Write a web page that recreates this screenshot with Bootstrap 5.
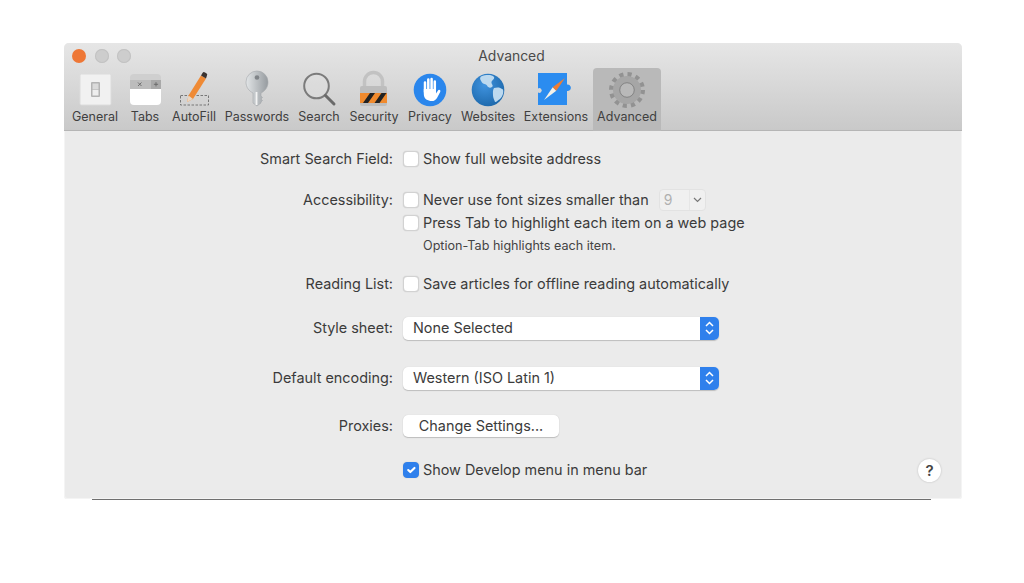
<!doctype html>
<html lang="en"><head><meta charset="utf-8"><title>Advanced</title>
<link href="https://cdn.jsdelivr.net/npm/bootstrap@5.3.0/dist/css/bootstrap.min.css" rel="stylesheet">
<style>
html,body{height:100%;background:#fff;overflow:hidden}
body{font-family:Inter,"Noto Sans",sans-serif;color:#3b3b3b;padding:43px 62px 0 64px;font-size:14.4px;line-height:18px}
.pref-win{height:456px;background:#ebebeb;border-radius:5px 5px 3px 3px;box-shadow:inset 0 0 0 1px #f4f4f4}
.pref-bar{height:88px;background:linear-gradient(#e6e6e6,#c9c9c9);border-bottom:1px solid #b5b5b5;border-radius:5px 5px 0 0}
.pref-title{height:25px;display:grid;grid-template-columns:1fr auto 1fr;align-items:center;font-size:13.9px;color:#4a4a4a}
.lights{padding-left:8px;gap:8.500px}
.lamp{width:14px;height:14px;border-radius:50%;background:#cdcdcd;box-shadow:inset 0 0 0 1px #c2c2c2}
.lamp-red{background:#ee7736;box-shadow:none}
.title-text{margin-right:3px}
.tools{padding-left:3px;height:63px}
.tool{height:63px;font-size:12.5px;line-height:14px;color:#3f3f3f;white-space:nowrap}
.tool svg{display:block;flex:none;overflow:visible}
.tool-on{background:#b9b9b9;border-radius:4px 4px 0 0}
.w-general{width:56px}.w-tabs{width:44px}.w-autofill{width:54px}.w-pass{width:72px}.w-search{width:52px}.w-security{width:58px}.w-privacy{width:54px}.w-web{width:62px}.w-ext{width:74px}.w-adv{width:68px}
.pref-row{display:flex;align-items:center;padding-right:21px}
.pref-label{width:330px;text-align:right;padding-right:1px;flex:none}
.pref-val{margin-left:9px;gap:4px;display:flex;align-items:center;white-space:nowrap}
.form-check-input.cbx{width:16px;height:16px;margin:0;border-radius:4px;border:1px solid #d2d2d2;background-color:#fff;flex:none;box-shadow:0 0 1px #bbb}
.form-check-input.cbx:checked{background-color:#2f80ec;border-color:#2f80ec}
.r1{margin-top:19px;height:18px}.r2{margin-top:23px;height:18px}.r3{margin-top:5px;height:18px}
.hint{margin-top:5px;padding-left:359px;font-size:12.600px;height:18px;color:#444}
.r4{margin-top:20px;height:18px}
.r5{margin-top:23px;height:24px}.r6{margin-top:26px;height:24px}.r7{margin-top:24px;height:24px}.r8{margin-top:21px;height:22px}
.pop{width:316px;height:23px;background:#fff;border-radius:5px;box-shadow:0 1px 1px #bdbdbd,0 0 1px #c5c5c5;padding-left:10px;overflow:hidden;display:flex;align-items:center;justify-content:space-between}
.pop-arrows{width:19px;height:23px;background:#2f80ec;display:flex;align-items:center;justify-content:center;flex:none}
.push{width:156px;height:22px;padding:0;background:#fff;border:0;border-radius:5px;box-shadow:0 1px 1px #bdbdbd,0 0 1px #c5c5c5;font-size:14.4px;color:#3b3b3b;line-height:22px}
.mini-pop{width:47px;height:22px;margin-left:6px;border:1px solid #e2e2e2;border-radius:4px;background:#f0f0f0;color:#b0b0b0;display:flex;align-items:center;font-size:14px}
.mini-num{width:30px;padding-left:4px;border-right:1px solid #e6e6e6;height:20px;line-height:20px}
.mini-arr{flex:1;display:flex;justify-content:center}
.help-btn{width:23px;height:23px;margin-left:auto;padding:0;border:0;border-radius:50%;background:#fff;box-shadow:0 0 2px #b5b5b5;font-weight:600;font-size:15px;line-height:23px;color:#444}
.pref-foot{height:1px;background:#6f6f6f;margin:0 31px 0 28px}
</style></head><body>
<div class="pref-win">
<div class="pref-bar">
 <div class="pref-title"><div class="d-flex lights"><span class="lamp lamp-red"></span><span class="lamp"></span><span class="lamp"></span></div><div class="title-text">Advanced</div><div></div></div>
 <div class="d-flex tools">
  <div class="tool w-general d-flex flex-column align-items-center"><svg width="40" height="42" viewBox="0 0 40 42"><rect x="5" y="6" width="31" height="31" rx="1.500" fill="#f1f1f1" stroke="#dcdcdc"/><rect x="16" y="14" width="9" height="15" rx="1" fill="#b3b3b3"/><rect x="17.500" y="15.500" width="6" height="6" fill="#dadada"/><rect x="17.500" y="22" width="6" height="5.500" fill="#eee"/></svg>General</div>
  <div class="tool w-tabs d-flex flex-column align-items-center"><svg width="40" height="42" viewBox="0 0 40 42"><path d="M5 10a4 4 0 0 1 4-4h23a4 4 0 0 1 4 4v2H5z" fill="#cfcfcf"/><rect x="5" y="12" width="31" height="9" fill="#bcbcbc"/><rect x="26" y="12" width="10" height="9" fill="#a9a9a9"/><path d="M5 21h31v12a4 4 0 0 1-4 4H9a4 4 0 0 1-4-4z" fill="#fff"/><path d="M13 14.500l3.500 3.500m0-3.500L13 18M31 14.200v4.200m-2.100-2.100h4.200" stroke="#666" stroke-width=".9" fill="none"/></svg>Tabs</div>
  <div class="tool w-autofill d-flex flex-column align-items-center"><svg width="40" height="42" viewBox="0 0 40 42"><rect x="6.500" y="27.500" width="28" height="9.500" fill="none" stroke="#777" stroke-width="1" stroke-dasharray="2.500 1.500"/><path d="M13 34l1.500-6.500L27 7.500l5 3L19 31z" fill="#ef8a35"/><path d="M13 34l1.500-6.500 4.500 3.500z" fill="#e9d6c2"/><path d="M27 7.500l1.500-2.500a1.800 1.800 0 0 1 2.500-.6l1.300.8a1.800 1.800 0 0 1 .6 2.500l-.9 2.800z" fill="#3b3330"/></svg>AutoFill</div>
  <div class="tool w-pass d-flex flex-column align-items-center"><svg width="40" height="42" viewBox="0 0 40 42"><defs><linearGradient id="k" x1="0" x2="1"><stop offset="0" stop-color="#e2e5e7"/><stop offset="1" stop-color="#969b9f"/></linearGradient></defs><path d="M16 25C12 23 9 19.500 9 14a11 11 0 0 1 22 0c0 5.500-3 9-7 11v3l1.500 1.500L24 31l1.500 1.500L24 34v1l-4 3-4-3z" fill="url(#k)" stroke="#a4a8ab" stroke-width=".6"/><circle cx="20" cy="9.500" r="2.300" fill="#808488"/><path d="M19.500 24v13" stroke="#f4f4f4" stroke-width="1.800"/></svg>Passwords</div>
  <div class="tool w-search d-flex flex-column align-items-center"><svg width="40" height="42" viewBox="0 0 40 42"><circle cx="17.500" cy="18" r="12.300" fill="#e1e1e1" fill-opacity=".4" stroke="#7b7b7b" stroke-width="2"/><path d="M26.500 27.500l8.500 8.500" stroke="#6a6a6a" stroke-width="3" stroke-linecap="round"/></svg>Search</div>
  <div class="tool w-security d-flex flex-column align-items-center"><svg width="40" height="42" viewBox="0 0 40 42"><path d="M10.500 20v-6.500a9 9 0 0 1 18 0V20" fill="none" stroke="#c2c2c2" stroke-width="3.500"/><rect x="6" y="18" width="27" height="20" rx="2" fill="#bdbdbd"/><rect x="6" y="25" width="27" height="10" fill="#f08a2d"/><path d="M9 35l7-10h5l-7 10zM20.500 35l7-10h5l-7 10z" fill="#222"/></svg>Security</div>
  <div class="tool w-privacy d-flex flex-column align-items-center"><svg width="40" height="42" viewBox="0 0 40 42"><circle cx="20" cy="22" r="16.300" fill="#2a86ec"/><path d="M15 24V14.500M18.300 22V11.500M21.600 22V11M24.800 22V13.500" stroke="#fff" stroke-width="2.500" stroke-linecap="round" fill="none"/><path d="M13.800 21h12.200v4.500l2-3a1.300 1.300 0 0 1 2.200 1.400l-3.200 6c-1.200 2-3 3.100-5.200 3.100-4 0-8-2-8-7z" fill="#fff"/></svg>Privacy</div>
  <div class="tool w-web d-flex flex-column align-items-center"><svg width="40" height="42" viewBox="0 0 40 42"><defs><radialGradient id="g" cx=".4" cy=".35" r=".75"><stop offset="0" stop-color="#3f93df"/><stop offset="1" stop-color="#1a64a6"/></radialGradient></defs><circle cx="20" cy="22" r="16.300" fill="url(#g)"/><path d="M13 8.500c5-2 11-2 13 .5 1 2-2 3-2.500 5s2.500 3.500.5 5-4 .5-5-1.500-4-1-5-3-3-4-1-6zM26 20c3-1 6-1 9 1.500 1 3-.5 7-3 9.500-2.500 1-3 3-5 3-.5-2-2-4-2-6.500s-.5-5.500 1-7.500z" fill="#bcd9ef"/></svg>Websites</div>
  <div class="tool w-ext d-flex flex-column align-items-center"><svg width="40" height="42" viewBox="0 0 40 42"><path d="M2 5h29v11.500a3.300 3.300 0 1 1 0 6.500V37H2V24.500a2.400 2.400 0 1 0 0-4z" fill="#2b8cf0"/><path d="M8 32l8.700-12.700 3.600 3.400z" fill="#f3f1ea"/><path d="M29 10L16.700 19.300l3.600 3.400z" fill="#ef7d33"/></svg>Extensions</div>
  <div class="tool tool-on w-adv d-flex flex-column align-items-center"><svg width="40" height="42" viewBox="0 0 40 42"><circle cx="20" cy="22" r="15.500" fill="none" stroke="#929292" stroke-width="5" stroke-dasharray="4.060 4.060"/><circle cx="20" cy="22" r="10.500" fill="none" stroke="#a6a6a6" stroke-width="7"/><circle cx="20" cy="22" r="7.300" fill="none" stroke="#858585" stroke-width="1"/></svg>Advanced</div>
 </div>
</div>
<div class="pref-row r1"><div class="pref-label">Smart Search Field:</div><div class="pref-val"><input class="form-check-input cbx" type="checkbox" aria-label="Show full website address"><span>Show full website address</span></div></div>
<div class="pref-row r2"><div class="pref-label">Accessibility:</div><div class="pref-val"><input class="form-check-input cbx" type="checkbox" aria-label="Never use font sizes"><span>Never use font sizes smaller than</span><div class="mini-pop"><span class="mini-num">9</span><span class="mini-arr"><svg width="9" height="6" viewBox="0 0 9 6"><path d="M1 1l3.500 3.500L8 1" fill="none" stroke="#777" stroke-width="1.200"/></svg></span></div></div></div>
<div class="pref-row r3"><div class="pref-label"></div><div class="pref-val"><input class="form-check-input cbx" type="checkbox" aria-label="Press Tab"><span>Press Tab to highlight each item on a web page</span></div></div>
<div class="hint">Option-Tab highlights each item.</div>
<div class="pref-row r4"><div class="pref-label">Reading List:</div><div class="pref-val"><input class="form-check-input cbx" type="checkbox" aria-label="Save articles"><span>Save articles for offline reading automatically</span></div></div>
<div class="pref-row r5"><div class="pref-label">Style sheet:</div><div class="pref-val"><div class="pop"><span>None Selected</span><span class="pop-arrows"><svg width="11" height="16" viewBox="0 0 11 16"><path d="M2 6l3.500-3.500L9 6M2 10l3.500 3.500L9 10" fill="none" stroke="#fff" stroke-width="1.500"/></svg></span></div></div></div>
<div class="pref-row r6"><div class="pref-label">Default encoding:</div><div class="pref-val"><div class="pop"><span>Western (ISO Latin 1)</span><span class="pop-arrows"><svg width="11" height="16" viewBox="0 0 11 16"><path d="M2 6l3.500-3.500L9 6M2 10l3.500 3.500L9 10" fill="none" stroke="#fff" stroke-width="1.500"/></svg></span></div></div></div>
<div class="pref-row r7"><div class="pref-label">Proxies:</div><div class="pref-val"><button type="button" class="btn push">Change Settings...</button></div></div>
<div class="pref-row r8"><div class="pref-label"></div><div class="pref-val"><input class="form-check-input cbx" type="checkbox" checked aria-label="Show Develop menu"><span>Show Develop menu in menu bar</span></div><button type="button" class="btn help-btn">?</button></div>
</div>
<div class="pref-foot"></div>
<script src="https://cdn.jsdelivr.net/npm/bootstrap@5.3.0/dist/js/bootstrap.bundle.min.js"></script>
</body></html>
